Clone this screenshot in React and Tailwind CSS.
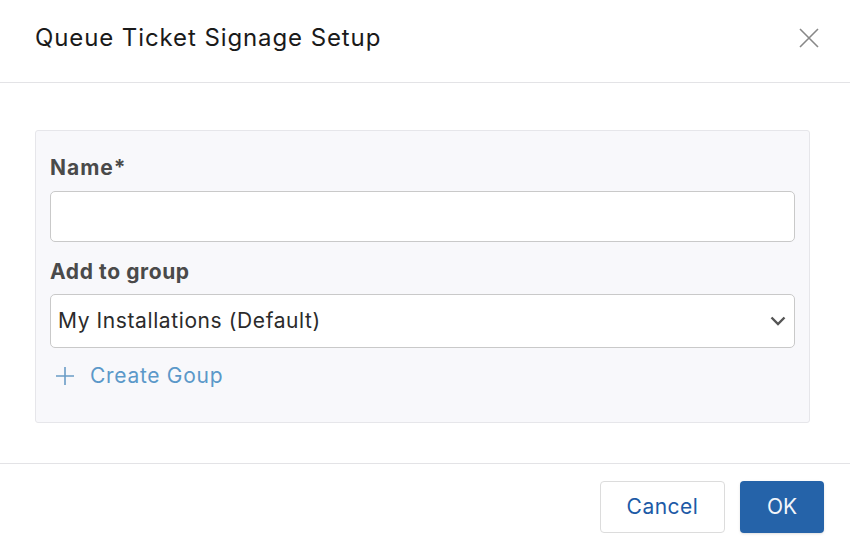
import { useState } from "react";

export default function App() {
  const [name, setName] = useState("");

  return (
    <div className="w-[850px] h-[548px] bg-white flex flex-col font-['Inter','Liberation_Sans',Arial,sans-serif]">
      {/* HEADER */}
      <div className="h-[83px] px-[35px] flex items-center justify-between border-b border-[#e3e3e6] shrink-0">
        <h1 className="text-[24px] tracking-[0.9px] text-[#1a1a1a] -mt-[6px]">Queue Ticket Signage Setup</h1>
        <button className="w-[24px] h-[24px] flex items-center justify-center -mt-[6px] mr-[-6px]">
          <svg width="20" height="20" viewBox="0 0 20 20" stroke="#888" strokeWidth="1.6" fill="none">
            <path d="M1 1 L19 19 M19 1 L1 19" />
          </svg>
        </button>
      </div>

      {/* BODY */}
      <div className="pl-[35px] pr-[40px] pt-[47px] pb-[40px]">
        <div className="border border-[#e6e6ea] bg-[#f8f8fb] rounded-[3px] px-[14px] pt-[25px] pb-[30px]">
          <label className="block text-[21px] tracking-[1px] font-bold text-[#4a4a4a] leading-[24px]">Name*</label>
          <input
            value={name}
            onChange={(e) => setName(e.target.value)}
            className="mt-[11px] w-full h-[51px] bg-white border border-[#c9c9c9] rounded-[5px] px-[8px] text-[20px] outline-none"
          />
          <label className="block mt-[18px] text-[21px] tracking-[0.6px] font-bold text-[#4a4a4a] leading-[24px]">Add to group</label>
          <div className="mt-[10px] relative h-[54px] bg-white border border-[#c9c9c9] rounded-[5px] flex items-center pl-[7px] pr-[8px]">
            <span className="flex-1 text-[21px] tracking-[0.6px] text-[#2b2b2b]">My Installations (Default)</span>
            <svg width="16" height="10" viewBox="0 0 16 10" fill="none" stroke="#555" strokeWidth="2.4">
              <path d="M1.5 1.5 L8 8 L14.5 1.5" />
            </svg>
          </div>
          <button className="mt-[12px] ml-[6px] flex items-center gap-[16px] text-[#5b98c9] text-[21px] tracking-[0.7px]">
            <svg width="18" height="18" viewBox="0 0 18 18" stroke="#6a9cc6" strokeWidth="1.6" fill="none">
              <path d="M9 0 V18 M0 9 H18" />
            </svg>
            <span>Create Goup</span>
          </button>
        </div>
      </div>

      {/* FOOTER */}
      <div className="border-t border-[#e3e3e6] flex justify-end gap-[15px] px-[26px] pt-[17px]">
        <button className="w-[125px] h-[52px] bg-white border border-[#dcdcdc] rounded-[4px] text-[21px] tracking-[0.5px] text-[#1d5aa6]">
          Cancel
        </button>
        <button className="w-[84px] h-[52px] bg-[#2563a9] rounded-[4px] text-[21px] text-[#f2f5fa] shadow-sm">
          OK
        </button>
      </div>
    </div>
  );
}
